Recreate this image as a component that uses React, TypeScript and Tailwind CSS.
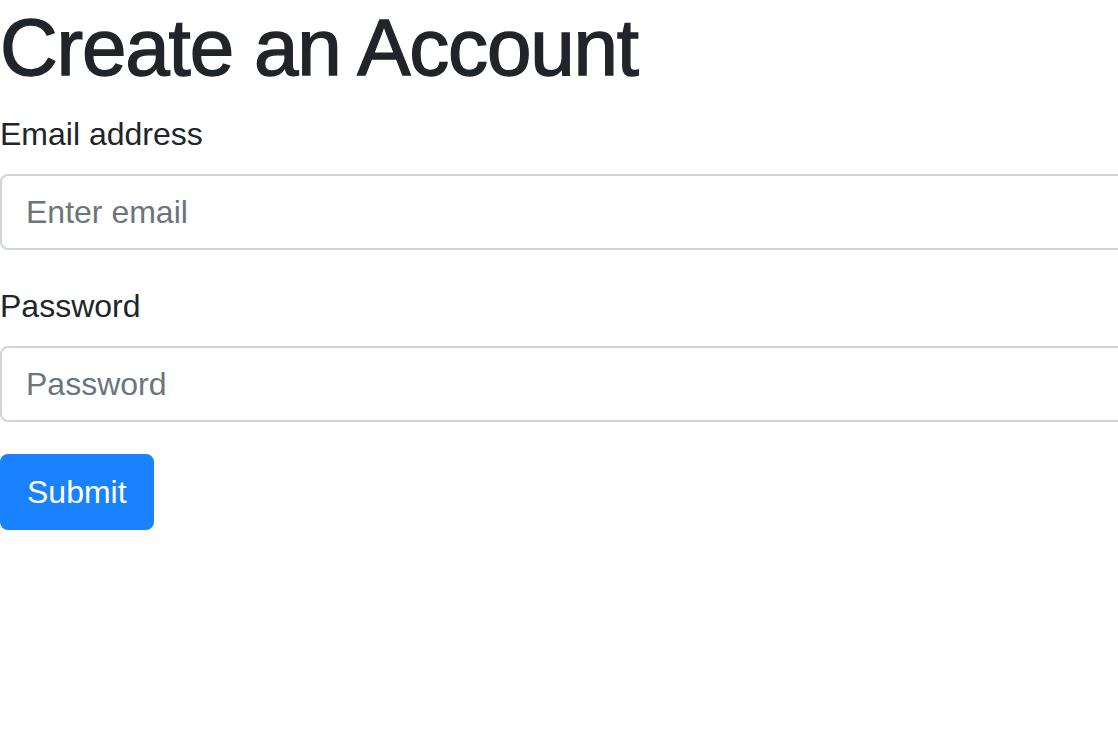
export default function App() {
    return (
        <div className="w-full min-h-screen overflow-hidden bg-white text-[#212529] font-['Liberation_Sans',Arial,sans-serif]">

            <h1 className="text-[80px] leading-[1.2] tracking-[-1.2px] [-webkit-text-stroke:1.4px_#212529] mb-[14px] whitespace-nowrap">
                Create an Account
            </h1>

            <form className="w-[1300px]">

                <div className="mb-8">
                    <label className="inline-block text-[32px] leading-[1.5] mb-4">
                        Email address
                    </label>
                    <input
                        type="email"
                        placeholder="Enter email"
                        className="block w-full h-[76px] px-6 text-[32px] border-2 border-[#ced4da] rounded-lg placeholder:text-[#6c757d] outline-none"
                    />
                </div>

                <div className="mb-8">
                    <label className="inline-block text-[32px] leading-[1.5] mb-4">
                        Password
                    </label>
                    <input
                        type="password"
                        placeholder="Password"
                        className="block w-full h-[76px] px-6 text-[32px] border-2 border-[#ced4da] rounded-lg placeholder:text-[#6c757d] outline-none"
                    />
                </div>

                <button
                    type="button"
                    className="h-[76px] px-[25px] text-[32px] leading-[1.5] text-white bg-[#1a82ff] border-2 border-[#1a82ff] rounded-lg"
                >
                    Submit
                </button>

            </form>

        </div>
    )
}
